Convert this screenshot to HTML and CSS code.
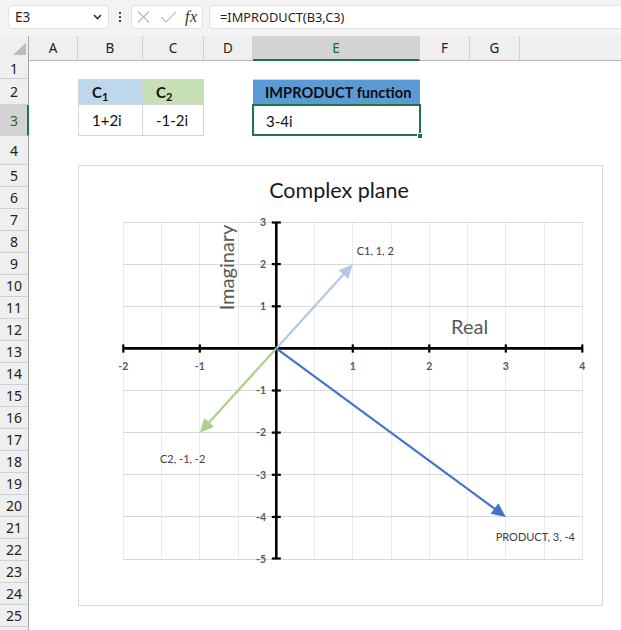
FILE: index.html
```html
<!DOCTYPE html>
<html>
<head>
<meta charset="utf-8">
<link rel="stylesheet" href="styles.css">
</head>
<body>
<div class="app">
  <div class="toolbar">
    <div class="namebox">
      <span>E3</span>
      <svg class="chev" width="9" height="6" viewBox="0 0 9 6"><polyline points="1,1 4.5,4.5 8,1" fill="none" stroke="#333" stroke-width="1.6"/></svg>
    </div>
    <div class="vdots"><i></i><i></i><i></i></div>
    <div class="fxbox">
      <svg class="ico-x" width="13" height="12" viewBox="0 0 13 12"><path d="M1 0.5 L12 11.5 M12 0.5 L1 11.5" stroke="#b9b9b9" stroke-width="1.1" fill="none"/></svg>
      <svg class="ico-ok" width="17" height="12" viewBox="0 0 17 12"><path d="M1 6 L6 11 L16 0.8" stroke="#b9b9b9" stroke-width="1.1" fill="none"/></svg>
      <span class="fx">fx</span>
    </div>
    <div class="formula">=IMPRODUCT(B3,C3)</div>
  </div>

  <div class="sheet">
    <div class="row hdr">
      <div class="corner"><svg width="28" height="21" viewBox="0 0 28 21"><polygon points="13,19 26,19 26,6.5" fill="#bcbcbc"/></svg></div>
      <div class="colh">A</div>
      <div class="colh">B</div>
      <div class="colh">C</div>
      <div class="colh">D</div>
      <div class="colh sel">E</div>
      <div class="colh">F</div>
      <div class="colh">G</div>
      <div class="colh last"></div>
    </div>
    <div class="row r1"><div class="rowh">1</div></div>
    <div class="row r2">
      <div class="rowh">2</div>
      <div class="cell"></div>
      <div class="cell tb tb-l tb-t fill-blue"><b>C<sub>1</sub></b></div>
      <div class="cell tb tb-t fill-green"><b>C<sub>2</sub></b></div>
      <div class="cell"></div>
      <div class="cell head">IMPRODUCT function</div>
    </div>
    <div class="row r3">
      <div class="rowh sel">3</div>
      <div class="cell"></div>
      <div class="cell tb tb-l">1+2i</div>
      <div class="cell tb">-1-2i</div>
      <div class="cell"></div>
      <div class="cell active">3-4i</div>
    </div>
    <div class="row r4"><div class="rowh">4</div></div>
    <div class="row"><div class="rowh">5</div></div>
    <div class="row"><div class="rowh">6</div></div>
    <div class="row"><div class="rowh">7</div></div>
    <div class="row"><div class="rowh">8</div></div>
    <div class="row"><div class="rowh">9</div></div>
    <div class="row"><div class="rowh">10</div></div>
    <div class="row"><div class="rowh">11</div></div>
    <div class="row"><div class="rowh">12</div></div>
    <div class="row"><div class="rowh">13</div></div>
    <div class="row"><div class="rowh">14</div></div>
    <div class="row"><div class="rowh">15</div></div>
    <div class="row"><div class="rowh">16</div></div>
    <div class="row"><div class="rowh">17</div></div>
    <div class="row"><div class="rowh">18</div></div>
    <div class="row"><div class="rowh">19</div></div>
    <div class="row"><div class="rowh">20</div></div>
    <div class="row"><div class="rowh">21</div></div>
    <div class="row"><div class="rowh">22</div></div>
    <div class="row"><div class="rowh">23</div></div>
    <div class="row"><div class="rowh">24</div></div>
    <div class="row"><div class="rowh">25</div></div>
    <div class="row"><div class="rowh"></div></div>
  </div>

  <div class="chart">
    <svg width="523" height="439" viewBox="79 166 523 439">
      <g class="vgrid">
        <line x1="123.5" y1="222" x2="123.5" y2="559"/>
        <line x1="161.5" y1="222" x2="161.5" y2="559"/>
        <line x1="199.5" y1="222" x2="199.5" y2="559"/>
        <line x1="238.5" y1="222" x2="238.5" y2="559"/>
        <line x1="314.5" y1="222" x2="314.5" y2="559"/>
        <line x1="352.5" y1="222" x2="352.5" y2="559"/>
        <line x1="391.5" y1="222" x2="391.5" y2="559"/>
        <line x1="429.5" y1="222" x2="429.5" y2="559"/>
        <line x1="467.5" y1="222" x2="467.5" y2="559"/>
        <line x1="505.5" y1="222" x2="505.5" y2="559"/>
        <line x1="544.5" y1="222" x2="544.5" y2="559"/>
        <line x1="582.5" y1="222" x2="582.5" y2="559"/>
      </g>
      <g class="hgrid">
        <line x1="123" y1="222.5" x2="583" y2="222.5"/>
        <line x1="123" y1="264.5" x2="583" y2="264.5"/>
        <line x1="123" y1="306.5" x2="583" y2="306.5"/>
        <line x1="123" y1="390.5" x2="583" y2="390.5"/>
        <line x1="123" y1="432.5" x2="583" y2="432.5"/>
        <line x1="123" y1="474.5" x2="583" y2="474.5"/>
        <line x1="123" y1="516.5" x2="583" y2="516.5"/>
        <line x1="123" y1="559.5" x2="583" y2="559.5"/>
      </g>

      <text class="title" x="339" y="198" text-anchor="middle">Complex plane</text>
      <text class="axtitle" transform="translate(234,267.5) rotate(-90)" text-anchor="middle">Imaginary</text>
      <text class="axtitle" x="451" y="334.3">Real</text>

      <g class="axis">
        <line x1="276.3" y1="222" x2="276.3" y2="559" class="main"/>
        <line x1="123.3" y1="348.4" x2="582.3" y2="348.4" class="main"/>
        <line x1="123.3" y1="344.4" x2="123.3" y2="352.6"/>
        <line x1="199.8" y1="344.4" x2="199.8" y2="352.6"/>
        <line x1="352.8" y1="344.4" x2="352.8" y2="352.6"/>
        <line x1="429.3" y1="344.4" x2="429.3" y2="352.6"/>
        <line x1="505.8" y1="344.4" x2="505.8" y2="352.6"/>
        <line x1="582.3" y1="344.4" x2="582.3" y2="352.6"/>
        <line x1="271.8" y1="222.5" x2="280.8" y2="222.5"/>
        <line x1="271.8" y1="264.1" x2="280.8" y2="264.1"/>
        <line x1="271.8" y1="306.3" x2="280.8" y2="306.3"/>
        <line x1="271.8" y1="390.5" x2="280.8" y2="390.5"/>
        <line x1="271.8" y1="432.6" x2="280.8" y2="432.6"/>
        <line x1="271.8" y1="474.8" x2="280.8" y2="474.8"/>
        <line x1="271.8" y1="516.9" x2="280.8" y2="516.9"/>
        <line x1="271.8" y1="558.5" x2="280.8" y2="558.5"/>
      </g>

      <g class="xlab" text-anchor="middle">
        <text x="123.3" y="369.5">-2</text>
        <text x="199.8" y="369.5">-1</text>
        <text x="352.8" y="369.5">1</text>
        <text x="429.3" y="369.5">2</text>
        <text x="505.8" y="369.5">3</text>
        <text x="582.3" y="369.5">4</text>
      </g>
      <g class="ylab" text-anchor="end">
        <text x="266" y="226">3</text>
        <text x="266" y="268">2</text>
        <text x="266" y="310">1</text>
        <text x="266" y="394.3">-1</text>
        <text x="266" y="436.4">-2</text>
        <text x="266" y="478.5">-3</text>
        <text x="266" y="520.7">-4</text>
        <text x="266" y="562.8">-5</text>
      </g>

      <g class="vec">
        <line x1="276.3" y1="348.4" x2="344.73" y2="273.03" stroke="#b4c7e7"/>
        <polygon points="352.8,264.15 348.2,278.88 338.58,270.14" fill="#b4c7e7"/>
        <line x1="276.3" y1="348.4" x2="207.87" y2="423.77" stroke="#a9d18e"/>
        <polygon points="199.8,432.65 214.02,426.66 204.4,417.92" fill="#a9d18e"/>
        <line x1="276.3" y1="348.4" x2="496.13" y2="509.8" stroke="#4472c4"/>
        <polygon points="505.8,516.9 490.66,513.85 498.36,503.37" fill="#4472c4"/>
      </g>

      <g class="dlab">
        <text x="356.7" y="254.5">C1, 1, 2</text>
        <text x="160" y="462.5">C2, -1, -2</text>
        <text x="495.7" y="541">PRODUCT, 3, -4</text>
      </g>
    </svg>
  </div>
</div>
</body>
</html>
```

FILE: styles.css
```css
html, body {
  margin: 0;
  padding: 0;
  background: #ffffff;
}
body {
  width: 621px;
  height: 630px;
  overflow: hidden;
  font-family: "Lato", "Liberation Sans", sans-serif;
}
.app {
  position: relative;
  width: 621px;
  height: 630px;
  overflow: hidden;
}

/* ---------- formula bar ---------- */
.toolbar {
  height: 36px;
  box-sizing: border-box;
  background: #f3f3f3;
  display: flex;
  align-items: flex-start;
  padding: 5px 0 0 8px;
  font-family: "Noto Sans", "Open Sans", sans-serif;
  color: #1f1f1f;
}
.namebox {
  width: 101px;
  height: 24px;
  box-sizing: border-box;
  background: #fff;
  border: 1px solid #e2e2e2;
  border-radius: 4px;
  display: flex;
  align-items: center;
  justify-content: space-between;
  padding: 0 6px 0 6px;
  font-size: 13.5px;
}
.chev { display: block; }
.vdots {
  width: 22px;
  height: 24px;
  display: flex;
  flex-direction: column;
  align-items: center;
  justify-content: center;
  gap: 2px;
}
.vdots i {
  display: block;
  width: 2px;
  height: 2px;
  background: #444;
}
.fxbox {
  width: 72px;
  height: 24px;
  box-sizing: border-box;
  background: #fff;
  border: 1px solid #e2e2e2;
  border-radius: 4px;
  display: flex;
  align-items: center;
  padding-left: 5px;
}
.ico-x { margin-right: 10px; }
.ico-ok { margin-right: 8px; }
.fx {
  font-family: "Liberation Serif", serif;
  font-style: italic;
  font-size: 16px;
  color: #333;
  letter-spacing: 0.5px;
}
.formula {
  flex: 1;
  height: 24px;
  box-sizing: border-box;
  margin-left: 6px;
  margin-right: -20px;
  background: #fff;
  border: 1px solid #e2e2e2;
  border-radius: 4px;
  padding-left: 10px;
  font-size: 12.8px;
  line-height: 22px;
}

/* ---------- sheet grid ---------- */
.sheet {
  display: flex;
  flex-direction: column;
}
.row {
  display: grid;
  grid-template-columns: 29px 49px 65px 61px 49px 167px 50px 50px 1fr;
  height: 22px;
}
.row.hdr { height: 22px; }
.row.r1 { height: 21px; }
.row.r2 { height: 26px; }
.row.r3 { height: 31px; }
.row.r4 { height: 29px; }

.corner, .colh {
  background: #efefef;
  border-bottom: 1px solid #b7b7b7;
  box-sizing: border-box;
}
.corner {
  border-right: 1px solid #a6a6a6;
}
.colh {
  border-right: 1px solid #d0d0d0;
  font-family: "Noto Sans", "Open Sans", sans-serif;
  font-size: 13.5px;
  color: #222;
  display: flex;
  align-items: center;
  justify-content: center;
}
.colh.sel {
  background: #d3d3d3;
  color: #1d6b3f;
  border-bottom: 2px solid #217346;
  padding-top: 1px;
}
.colh.last { border-right: none; }

.rowh {
  background: #efefef;
  border-right: 1px solid #a6a6a6;
  border-bottom: 1px solid #d0d0d0;
  box-sizing: border-box;
  font-family: "Noto Sans", "Open Sans", sans-serif;
  font-size: 14px;
  color: #222;
  display: flex;
  align-items: center;
  justify-content: center;
}
.rowh.sel {
  background: #d3d3d3;
  color: #1d6b3f;
  border-right: 2px solid #217346;
  padding-left: 1px;
}

.cell {
  box-sizing: border-box;
  font-size: 15px;
  color: #111;
  display: flex;
  align-items: center;
  padding-left: 13px;
}
.tb {
  border-right: 1px solid #d4d4d4;
  border-bottom: 1px solid #d4d4d4;
}
.tb-l { border-left: 1px solid #d4d4d4; }
.tb-t { border-top: 1px solid #d4d4d4; }
.fill-blue { background: #bdd7ee; }
.fill-green { background: #c6e0b4; }
.cell b { font-weight: 700; }
.cell sub {
  font-size: 11px;
  vertical-align: -3px;
  line-height: 0;
}
.cell.head {
  background: #5b9bd5;
  border-top: 1px solid #cfd8e2;
  font-weight: 700;
  font-size: 14.6px;
  padding-left: 12px;
  color: #0d0d0d;
}
.cell.active {
  position: relative;
  padding-left: 13px;
}
.cell.active::after {
  content: "";
  position: absolute;
  left: -1px;
  top: -1px;
  right: -1px;
  bottom: 0;
  border: 2px solid #217346;
}
.cell.active::before {
  content: "";
  position: absolute;
  right: -3px;
  bottom: -3px;
  width: 6px;
  height: 6px;
  background: #217346;
  border: 1px solid #fff;
  box-sizing: border-box;
  z-index: 2;
}

/* ---------- chart ---------- */
.chart {
  position: absolute;
  left: 78px;
  top: 165px;
  width: 525px;
  height: 441px;
  box-sizing: border-box;
  border: 1px solid #d9d9d9;
  background: #fff;
}
.chart svg { display: block; }
.vgrid line { stroke: #ebebeb; stroke-width: 1; }
.hgrid line { stroke: #d9d9d9; stroke-width: 1; }
.axis line { stroke: #000; stroke-width: 2.2; }
.axis line.main { stroke-width: 2.6; }
.vec line { stroke-width: 2.2; }
.title {
  font-family: "Lato", sans-serif;
  font-size: 21.5px;
  fill: #1a1a1a;
}
.axtitle {
  font-family: "Lato", sans-serif;
  font-size: 20px;
  fill: #595959;
}
.xlab text {
  font-family: "Lato", sans-serif;
  font-size: 10.5px;
  font-weight: 700;
  fill: #595959;
}
.ylab text {
  font-family: "Lato", sans-serif;
  font-size: 10.5px;
  font-weight: 700;
  fill: #595959;
}
.dlab text {
  font-family: "Lato", sans-serif;
  font-size: 11px;
  fill: #404040;
}
```
